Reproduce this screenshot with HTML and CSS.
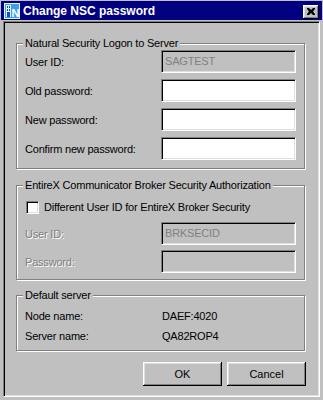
FILE: index.html
```html
<!DOCTYPE html>
<html lang="en">
<head>
    <meta charset="UTF-8">
    <title>Change NSC password</title>
    <link rel="stylesheet" href="styles.css">
</head>
<body>

    <div class="window">
        <div class="titlebar">
            <svg class="app-icon" width="16" height="16" viewBox="0 0 16 16">
                <rect x="0.5" y="0.5" width="15" height="15" fill="#3aa0e8" stroke="#e8f4ff"/>
                <rect x="2" y="2" width="5" height="12" fill="#dff0ff"/>
                <rect x="3" y="3" width="1" height="2" fill="#1050c0"/>
                <rect x="5" y="3" width="1" height="2" fill="#1050c0"/>
                <rect x="3" y="6" width="1" height="2" fill="#1050c0"/>
                <rect x="5" y="6" width="1" height="2" fill="#1050c0"/>
                <rect x="3" y="9" width="3" height="5" fill="#1050c0"/>
                <text x="7.5" y="13.5" font-family="Liberation Sans, sans-serif" font-size="11" font-weight="bold" fill="#ffffff">N</text>
            </svg>
            <span class="title">Change NSC password</span>
            <button class="close-btn">
                <svg width="8" height="7" viewBox="0 0 8 7">
                    <path d="M0 0h2l2 2 2-2h2v1L6 3.5 8 6v1H6L4 5 2 7H0V6l2-2.5L0 1z" fill="#000"/>
                </svg>
            </button>
        </div>

        <div class="client">
            <fieldset class="group group-logon">
                <legend>Natural Security Logon to Server</legend>
                <div class="form-grid">
                    <label>User ID:</label>
                    <div class="field readonly">SAGTEST</div>
                    <label>Old password:</label>
                    <div class="field"></div>
                    <label>New password:</label>
                    <div class="field"></div>
                    <label>Confirm new password:</label>
                    <div class="field"></div>
                </div>
            </fieldset>

            <fieldset class="group group-broker">
                <legend>EntireX Communicator Broker Security Authorization</legend>
                <div class="check-row">
                    <span class="checkbox"></span>
                    <span>Different User ID for EntireX Broker Security</span>
                </div>
                <div class="form-grid tight">
                    <label class="disabled">User ID:</label>
                    <div class="field readonly">BRKSECID</div>
                    <label class="disabled">Password:</label>
                    <div class="field readonly"></div>
                </div>
            </fieldset>

            <fieldset class="group group-server">
                <legend>Default server</legend>
                <div class="info-grid">
                    <span>Node name:</span>
                    <span>DAEF:4020</span>
                    <span>Server name:</span>
                    <span>QA82ROP4</span>
                </div>
            </fieldset>

            <div class="buttons">
                <button class="btn">OK</button>
                <button class="btn">Cancel</button>
            </div>
        </div>
    </div>

</body>
</html>
```

FILE: styles.css
```css
* {
    margin: 0;
    padding: 0;
    box-sizing: border-box;
}

body {
    background: #c0c0c0;
    font-family: "Liberation Sans", Arial, sans-serif;
    font-size: 11px;
    letter-spacing: -0.2px;
    color: #000;
}

.window {
    width: 323px;
    height: 400px;
    padding: 1px;
    background: #c0c0c0;
    display: flex;
    flex-direction: column;
}

/* title bar */
.titlebar {
    height: 19px;
    background: #000080;
    display: flex;
    align-items: center;
    margin-bottom: 1px;
}

.app-icon {
    margin-left: 3px;
    flex-shrink: 0;
}

.title {
    margin-left: 3px;
    font-weight: bold;
    font-size: 12px;
    letter-spacing: 0;
    color: #fff;
    flex: 1;
}

.close-btn {
    width: 16px;
    height: 14px;
    margin-right: 3px;
    margin-top: 2px;
    background: #c0c0c0;
    border: none;
    box-shadow: inset -1px -1px #000, inset 1px 1px #fff, inset -2px -2px #808080, inset 2px 2px #dfdfdf;
    display: flex;
    align-items: center;
    justify-content: center;
    padding-bottom: 1px;
}

/* client area */
.client {
    flex: 1;
    margin: 0 2px 2px 2px;
    border-top: 1px solid #808080;
    border-left: 1px solid #808080;
    border-right: 1px solid #fff;
    border-bottom: 1px solid #fff;
    box-shadow: inset 1px 1px #000, inset -1px -1px #dfdfdf;
    padding: 15px 12px 0 12px;
}

.group {
    width: 289px;
    border: 1px solid #808080;
    box-shadow: inset 1px 1px #fff, 1px 1px #fff;
    padding: 0 0 0 8px;
}

.group legend {
    margin-left: -2px;
    padding: 0 2px;
    line-height: 13px;
    background: #c0c0c0;
}

.group-logon {
    padding-bottom: 8px;
}

.group-broker {
    margin-top: 10px;
    padding-bottom: 6px;
}

.group-server {
    margin-top: 9px;
    padding-top: 4px;
    padding-bottom: 4px;
}

.form-grid {
    display: grid;
    grid-template-columns: 136px 135px;
    row-gap: 6px;
    align-items: center;
}

.form-grid.tight {
    row-gap: 5px;
    margin-top: 7px;
}

.field {
    height: 23px;
    background: #fff;
    border-top: 1px solid #808080;
    border-left: 1px solid #808080;
    border-right: 1px solid #fff;
    border-bottom: 1px solid #fff;
    box-shadow: inset 1px 1px #000, inset -1px -1px #dfdfdf;
    padding: 3px 0 0 3px;
    line-height: 15px;
    color: #000;
}

.field.readonly {
    background: #c0c0c0;
    color: #808080;
}

.disabled {
    color: #808080;
    text-shadow: 1px 1px #fff;
}

.check-row {
    display: flex;
    align-items: center;
    gap: 5px;
    height: 16px;
    margin-top: 7px;
    margin-left: 1px;
}

.checkbox {
    width: 13px;
    height: 13px;
    background: #fff;
    border-top: 1px solid #808080;
    border-left: 1px solid #808080;
    border-right: 1px solid #fff;
    border-bottom: 1px solid #fff;
    box-shadow: inset 1px 1px #000, inset -1px -1px #dfdfdf;
}

.info-grid {
    display: grid;
    grid-template-columns: 137px 1fr;
    grid-auto-rows: 20px;
    align-items: center;
}

.buttons {
    display: flex;
    justify-content: flex-end;
    gap: 5px;
    margin-top: 11px;
    padding-right: 1px;
}

.btn {
    width: 79px;
    height: 24px;
    background: #c0c0c0;
    border: none;
    box-shadow: inset -1px -1px #000, inset 1px 1px #fff, inset -2px -2px #808080, inset 2px 2px #dfdfdf;
    font-family: inherit;
    font-size: 11px;
    color: #000;
}
```
